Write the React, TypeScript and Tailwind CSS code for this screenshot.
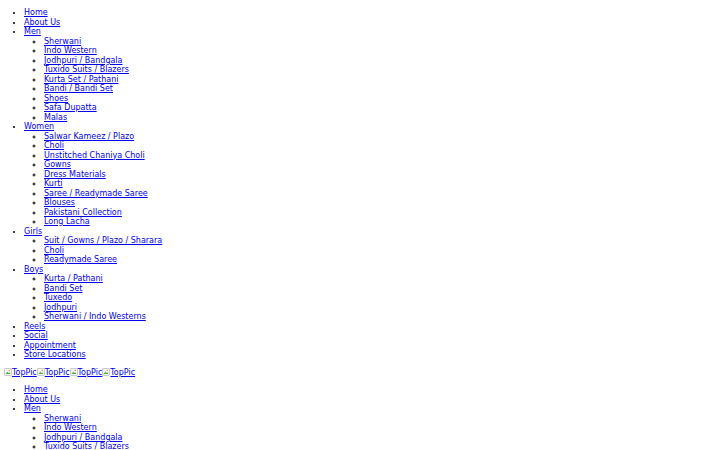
import React from 'react';

type Item = { label: string; children?: string[] };

const menu: Item[] = [
  { label: 'Home' },
  { label: 'About Us' },
  {
    label: 'Men',
    children: [
      'Sherwani',
      'Indo Western',
      'Jodhpuri / Bandgala',
      'Tuxido Suits / Blazers',
      'Kurta Set / Pathani',
      'Bandi / Bandi Set',
      'Shoes',
      'Safa Dupatta',
      'Malas',
    ],
  },
  {
    label: 'Women',
    children: [
      'Salwar Kameez / Plazo',
      'Choli',
      'Unstitched Chaniya Choli',
      'Gowns',
      'Dress Materials',
      'Kurti',
      'Saree / Readymade Saree',
      'Blouses',
      'Pakistani Collection',
      'Long Lacha',
    ],
  },
  { label: 'Girls', children: ['Suit / Gowns / Plazo / Sharara', 'Choli', 'Readymade Saree'] },
  { label: 'Boys', children: ['Kurta / Pathani', 'Bandi Set', 'Tuxedo', 'Jodhpuri', 'Sherwani / Indo Westerns'] },
  { label: 'Reels' },
  { label: 'Social' },
  { label: 'Appointment' },
  { label: 'Store Locations' },
];

// broken image placeholder, like the browser draws it
const BrokenPic = () => (
  <a href="#" className="text-[#0000ee] underline inline-flex items-center">
    <svg width="8" height="8" viewBox="0 0 16 16" className="shrink-0">
      <rect x="1.5" y="1.5" width="13" height="13" fill="#f3f3f3" stroke="#9a9a9a" />
      <path d="M3 12 L6.5 7.5 L9 10 L10.5 8.5 L13 12 Z" fill="#4caf50" />
      <circle cx="10.5" cy="5" r="1.5" fill="#e0a030" />
    </svg>
    <span>TopPic</span>
  </a>
);

const Menu = () => (
  <ul className="list-disc pl-5 my-2">
    {menu.map((item) => (
      <li key={item.label}>
        <a href="#" className="text-[#0000ee] underline">
          {item.label}
        </a>
        {item.children && (
          <ul className="list-[circle] pl-5">
            {item.children.map((c, i) => (
              <li key={i}>
                <a href="#" className="text-[#0000ee] underline">
                  {c}
                </a>
              </li>
            ))}
          </ul>
        )}
      </li>
    ))}
  </ul>
);

export default function App() {
  return (
    <div className="bg-white text-black text-[8px] leading-[9.5px] font-['DejaVu_Sans',sans-serif] min-h-[450px] px-1">
      <Menu />
      <div className="flex">
        <BrokenPic />
        <BrokenPic />
        <BrokenPic />
        <BrokenPic />
      </div>
      <Menu />
    </div>
  );
}
